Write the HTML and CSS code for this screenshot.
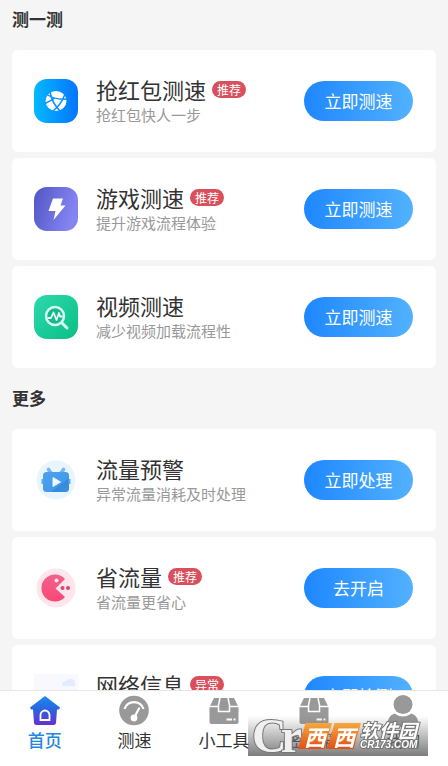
FILE: index.html
```
<!DOCTYPE html>
<html lang="zh-CN">
<head>
<meta charset="utf-8">
<meta name="viewport" content="width=device-width, initial-scale=1">
<title>测速</title>
<link rel="stylesheet" href="styles.css">
</head>
<body>
<main class="content">
  <section class="group">
    <h2 class="heading">测一测</h2>
    <article class="card">
      <svg class="icon" viewBox="0 0 46 46" aria-hidden="true">
        <defs><linearGradient id="g1"><stop offset="0" stop-color="#03b9ff"/><stop offset="1" stop-color="#0674ff"/></linearGradient></defs>
        <rect x="1" y="1" width="44" height="44" rx="13" fill="url(#g1)"/>
        <ellipse cx="23" cy="23" rx="10.500" ry="10" fill="#fff"/>
        <path d="M14 16.500Q22 22 34 21M17 14Q19 25 27 33M32 16Q28 27 20 33M12 25.500Q19 22 22 20" fill="none" stroke="#0a91ff" stroke-width="1.500"/>
      </svg>
      <div class="info">
        <h3 class="title">抢红包测速<span class="badge">推荐</span></h3>
        <p class="desc">抢红包快人一步</p>
      </div>
      <button class="action" type="button">立即测速</button>
    </article>
    <article class="card">
      <svg class="icon" viewBox="0 0 46 46" aria-hidden="true">
        <defs><linearGradient id="g2" x2="1" y2="0.300"><stop offset="0" stop-color="#5056c4"/><stop offset="1" stop-color="#8585f2"/></linearGradient></defs>
        <rect x="1" y="1" width="44" height="44" rx="13" fill="url(#g2)"/>
        <path d="M20 12.500H30L27.500 19.500H32.500L20.500 34L22.500 25H15.500Z" fill="#fff"/>
      </svg>
      <div class="info">
        <h3 class="title">游戏测速<span class="badge">推荐</span></h3>
        <p class="desc">提升游戏流程体验</p>
      </div>
      <button class="action" type="button">立即测速</button>
    </article>
    <article class="card">
      <svg class="icon" viewBox="0 0 46 46" aria-hidden="true">
        <defs><linearGradient id="g3" x2="1" y2="1"><stop offset="0" stop-color="#2cd9ae"/><stop offset="1" stop-color="#0abf83"/></linearGradient></defs>
        <rect x="1" y="1" width="44" height="44" rx="13" fill="url(#g3)"/>
        <circle cx="22" cy="22" r="9" fill="#17b98a" stroke="#d9fff4" stroke-width="2.500"/>
        <path d="M29 29L34 34" stroke="#d9fff4" stroke-width="3" stroke-linecap="round"/>
        <path d="M14.500 24H18L20.500 18.500L23.500 26L26 19L27 22.500H29.500" fill="none" stroke="#e3fff7" stroke-width="1.800" stroke-linejoin="round"/>
      </svg>
      <div class="info">
        <h3 class="title">视频测速</h3>
        <p class="desc">减少视频加载流程性</p>
      </div>
      <button class="action" type="button">立即测速</button>
    </article>
  </section>
  <section class="group">
    <h2 class="heading">更多</h2>
    <article class="card">
      <svg class="icon" viewBox="0 0 46 46" aria-hidden="true">
        <defs><linearGradient id="g4" x2="1" y2="1"><stop offset="0" stop-color="#4aa4ee"/><stop offset="0.650" stop-color="#4499e8"/><stop offset="0.660" stop-color="#3589dc"/><stop offset="1" stop-color="#3d91e2"/></linearGradient></defs>
        <circle cx="23" cy="23" r="19.500" fill="#e9f5fe"/>
        <path d="M15.500 12.500L18 16M30.500 12.500L28 16" stroke="#77b5ea" stroke-width="3.600" stroke-linecap="round"/>
        <rect x="10" y="15" width="26" height="20" rx="3.500" fill="url(#g4)"/>
        <path d="M9.500 22V27M36.500 22V27" stroke="#62abec" stroke-width="2"/>
        <path d="M20 20.500L27.500 25L20 29.500Z" fill="#eef8ff" stroke="#eef8ff" stroke-linejoin="round"/>
      </svg>
      <div class="info">
        <h3 class="title">流量预警</h3>
        <p class="desc">异常流量消耗及时处理</p>
      </div>
      <button class="action" type="button">立即处理</button>
    </article>
    <article class="card">
      <svg class="icon" viewBox="0 0 46 46" aria-hidden="true">
        <defs><linearGradient id="g5" x2="0" y2="1"><stop offset="0" stop-color="#ef638c"/><stop offset="1" stop-color="#fb4777"/></linearGradient></defs>
        <circle cx="23" cy="23" r="19.500" fill="#ffe5ec"/>
        <path d="M32 14A13.500 13.500 0 1 0 32 32L22.500 23.500Z" fill="url(#g5)"/>
        <circle cx="23.500" cy="15.500" r="2" fill="#ffe5ec"/>
        <circle cx="29.500" cy="23" r="2" fill="#d94474"/><circle cx="35" cy="23" r="2" fill="#d94474"/>
      </svg>
      <div class="info">
        <h3 class="title">省流量<span class="badge">推荐</span></h3>
        <p class="desc">省流量更省心</p>
      </div>
      <button class="action" type="button">去开启</button>
    </article>
    <article class="card">
      <svg class="icon" viewBox="0 0 46 46" aria-hidden="true">
        <rect x="1" y="1" width="44" height="44" fill="#f8f8fe"/>
        <path d="M29 11a4 4 0 0 1 4-3a5 5 0 0 1 9 2v3H29Z" fill="#e0edff"/>
      </svg>
      <div class="info">
        <h3 class="title">网络信息<span class="badge">异常</span></h3>
        <p class="desc">查看网络信息</p>
      </div>
      <button class="action" type="button">立即检测</button>
    </article>
  </section>
</main>
<nav class="tabs">
  <a class="tab active" href="#" aria-current="page">
    <svg class="tab-icon" viewBox="0 0 32 32" aria-hidden="true">
      <defs><linearGradient id="g6" x2="0" y2="1"><stop offset="0" stop-color="#168cf0"/><stop offset="0.450" stop-color="#2b65df"/><stop offset="1" stop-color="#6531d2"/></linearGradient></defs>
      <path d="M16 1L31 12.500L30 14.500H28L27 28Q26.800 30 24.500 30H7.500Q5.200 30 5 28L4 14.500H2L1 12.500Z" fill="url(#g6)"/>
      <path d="M11.500 25V20a4.500 4.500 0 0 1 9 0V25Z" fill="none" stroke="#fff" stroke-width="1.800"/>
    </svg>
    <span>首页</span>
  </a>
  <a class="tab" href="#">
    <svg class="tab-icon" viewBox="0 0 32 32" aria-hidden="true">
      <circle cx="16" cy="15.500" r="14.800" fill="#999"/>
      <path d="M6.500 14A10 10 0 0 1 25.500 14" fill="none" stroke="#fff" stroke-width="2.200"/>
      <circle cx="16" cy="23" r="3.400" fill="#fff"/>
      <path d="M16 23L21 13.500" stroke="#fff" stroke-width="2.200" stroke-linecap="round"/>
    </svg>
    <span>测速</span>
  </a>
  <a class="tab" href="#">
    <svg class="tab-icon" viewBox="0 0 32 32" aria-hidden="true">
      <path d="M6 3H26L30.500 12V27Q30.500 29 28.500 29H3.500Q1.500 29 1.500 27V12Z" fill="#999"/>
      <path d="M1 11.500H10M21.500 11.500H31M12 3L10.500 10V16.500H21.500V10L20 3" fill="none" stroke="#fff" stroke-width="1.500"/>
      <path d="M18.500 24.500H24M25.500 24.500H27.500" stroke="#fff" stroke-width="1.800"/>
    </svg>
    <span>小工具</span>
  </a>
  <a class="tab" href="#">
    <svg class="tab-icon" viewBox="0 0 32 32" aria-hidden="true">
      <path d="M6 3H26L30.500 12V27Q30.500 29 28.500 29H3.500Q1.500 29 1.500 27V12Z" fill="#999"/>
      <path d="M1 11.500H10M21.500 11.500H31M12 3L10.500 10V16.500H21.500V10L20 3" fill="none" stroke="#fff" stroke-width="1.500"/>
      <path d="M18.500 24.500H24M25.500 24.500H27.500" stroke="#fff" stroke-width="1.800"/>
    </svg>
    <span>密码箱</span>
  </a>
  <a class="tab" href="#">
    <svg class="tab-icon" viewBox="0 0 32 32" aria-hidden="true">
      <circle cx="16" cy="9.500" r="9.500" fill="#999"/>
      <path d="M0 32Q0 21 7.500 18.500Q16 24.500 24.500 18.500Q32 21 32 32Z" fill="#999"/>
    </svg>
    <span>我的</span>
  </a>
</nav>
<aside class="watermark">
  <span class="mark-cr">C<span class="mark-r">r</span></span>
  <span class="mark-tiles"><span class="tile">西</span><span class="tile">西</span></span>
  <span class="mark-site"><span class="site-name">软件园</span><span class="site-url">CR173.COM</span></span>
</aside>
</body>
</html>
```
FILE: styles.css
```
* {
  box-sizing: border-box;
}

body {
  display: flex;
  flex-direction: column;
  height: 100vh;
  margin: 0;
  background: #f5f5f5;
  color: #333;
  font-family: "Noto Sans CJK SC", sans-serif;
}

h2,
h3,
p {
  margin: 0;
  font-weight: 400;
}

.content {
  flex: 1;
  min-height: 0;
  padding: 0 12px;
  overflow-y: auto;
  scrollbar-width: none;
}

.group {
  display: flex;
  flex-direction: column;
  gap: 6px;
  padding-top: 7px;
}

.group + .group {
  padding-top: 18px;
}

.heading {
  margin-bottom: 13px;
  font-size: 17px;
  font-weight: 700;
  line-height: 24px;
}

.card {
  display: flex;
  align-items: center;
  min-height: 102px;
  padding: 0 23px 0 21px;
  border-radius: 6px;
  background: #fff;
}

.icon {
  flex: none;
  width: 46px;
  height: 46px;
}

.info {
  flex: 1;
  min-width: 0;
  margin-left: 17px;
}

.title {
  display: flex;
  align-items: center;
  gap: 6px;
  font-size: 22px;
  line-height: 28px;
}

.badge {
  padding: 0 5px;
  border-radius: 9px;
  background: #d9505c;
  color: #fff;
  font-size: 12px;
  line-height: 17px;
}

.desc {
  color: #999;
  font-size: 15px;
  line-height: 24px;
}

.action {
  flex: none;
  width: 109px;
  height: 40px;
  padding: 0 0 2px;
  border: 0;
  border-radius: 20px;
  background: linear-gradient(90deg, #1e87ff, #52b1ff);
  color: #fff;
  font: inherit;
  font-size: 17px;
}

.tabs {
  display: grid;
  grid-template-columns: repeat(5, 1fr);
  height: 76px;
  border-top: 1px solid #e6e6e6;
  background: #fff;
}

.tab {
  display: flex;
  flex-direction: column;
  align-items: center;
  gap: 1px;
  padding-top: 4px;
  color: #333;
  font-size: 17px;
  line-height: 24px;
  text-decoration: none;
}

.tab.active {
  color: #2389df;
  font-weight: 500;
}

.tab-icon {
  width: 32px;
  height: 32px;
}

.watermark {
  position: fixed;
  right: 20px;
  bottom: 10px;
  display: flex;
  align-items: center;
  width: 180px;
  height: 40px;
  padding-left: 4px;
  background: linear-gradient(rgba(110, 110, 110, 0), rgba(110, 110, 110, 0.9));
  white-space: nowrap;
}

.mark-cr {
  width: 46px;
  color: #f0f0f0;
  font-family: "Liberation Serif", serif;
  font-size: 48px;
  font-weight: 700;
  line-height: 40px;
  -webkit-text-stroke: 2px #777;
  paint-order: stroke fill;
}

.mark-r {
  margin-left: -6px;
}

.mark-tiles {
  display: flex;
}

.tile {
  width: 34px;
  margin-right: -5px;
  background: linear-gradient(#f6a83b, #e34e16);
  clip-path: polygon(22% 0, 100% 0, 78% 100%, 0 100%);
  color: #fff;
  font-size: 22px;
  font-style: italic;
  font-weight: 700;
  line-height: 26px;
  text-align: center;
}

.mark-site {
  display: flex;
  flex-direction: column;
  margin-left: 4px;
  color: #fff;
  font-style: italic;
  font-weight: 700;
  -webkit-text-stroke: 2px #777;
  paint-order: stroke fill;
}

.site-name {
  font-size: 19px;
  line-height: 18px;
}

.site-url {
  font-family: "Liberation Sans", sans-serif;
  font-size: 10px;
  line-height: 12px;
}
```
